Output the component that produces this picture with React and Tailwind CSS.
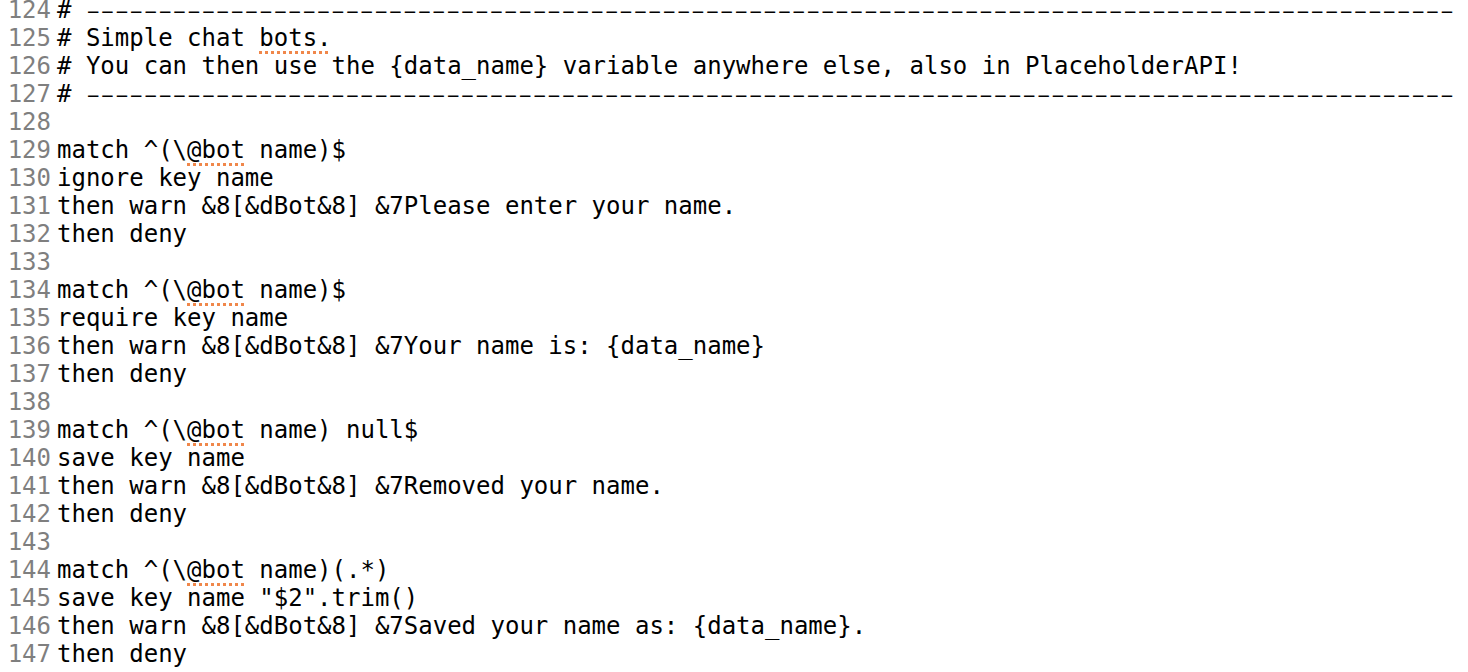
import React from 'react';

const dashes = '–'.repeat(95);

const Bot = ({ children }) => (
  <span className="underline decoration-dotted decoration-[#f0874a] decoration-3 underline-offset-[5px]">
    {children}
  </span>
);

const Rule = () => (
  <>
    {'# '}
    <span className="font-['Liberation_Mono',monospace] leading-none">{dashes}</span>
  </>
);

const lines = [
  [124, <Rule />],
  [125, <>{'# Simple chat '}<Bot>bots.</Bot></>],
  [126, <>{'# You can then use the {data_name} variable anywhere else, also in PlaceholderAPI!'}</>],
  [127, <Rule />],
  [128, ''],
  [129, <>{'match ^(\\'}<Bot>@bot</Bot>{' name)$'}</>],
  [130, 'ignore key name'],
  [131, 'then warn &8[&dBot&8] &7Please enter your name.'],
  [132, 'then deny'],
  [133, ''],
  [134, <>{'match ^(\\'}<Bot>@bot</Bot>{' name)$'}</>],
  [135, 'require key name'],
  [136, 'then warn &8[&dBot&8] &7Your name is: {data_name}'],
  [137, 'then deny'],
  [138, ''],
  [139, <>{'match ^(\\'}<Bot>@bot</Bot>{' name) null$'}</>],
  [140, 'save key name'],
  [141, 'then warn &8[&dBot&8] &7Removed your name.'],
  [142, 'then deny'],
  [143, ''],
  [144, <>{'match ^(\\'}<Bot>@bot</Bot>{' name)(.*)'}</>],
  [145, 'save key name "$2".trim()'],
  [146, 'then warn &8[&dBot&8] &7Saved your name as: {data_name}.'],
  [147, 'then deny'],
  [148, ''],
];

export default function App() {
  return (
    <div className="w-[1468px] h-[672px] overflow-hidden bg-white font-['DejaVu_Sans_Mono',monospace] text-[24px] leading-[28px] text-black">
      <div className="-mt-1 flex flex-col">
        {lines.map(([n, code]) => (
          <div key={n} className="flex h-[28px] whitespace-pre">
            <span className="w-[51px] shrink-0 text-right text-[#7f7f7f]">{n === 148 ? '' : n}</span>
            <span className="ml-[6px]">{code}</span>
          </div>
        ))}
      </div>
    </div>
  );
}
